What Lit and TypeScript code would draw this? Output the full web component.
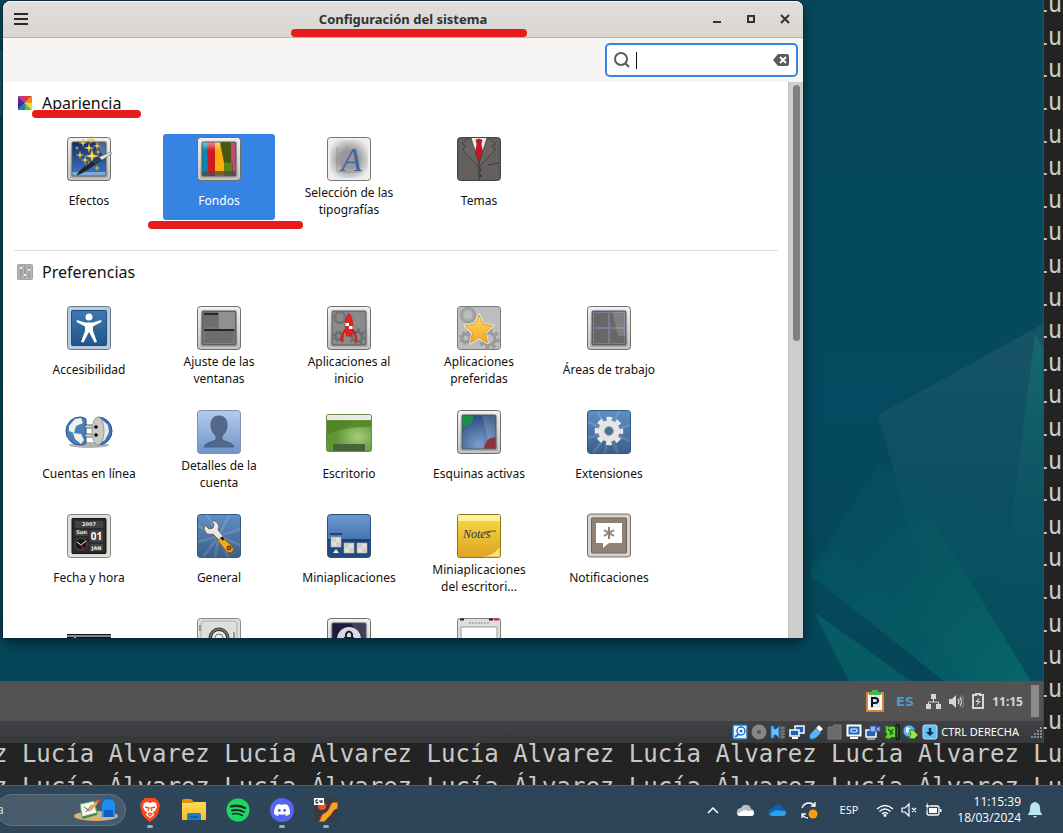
import { LitElement, html, svg, css, nothing } from "lit";
import { customElement } from "lit/decorators.js";
import { classMap } from "lit/directives/class-map.js";

const frame = (fill: string, inner: unknown = nothing) => svg`
  <rect x="2.5" y="2.5" width="43" height="43" rx="3" fill="url(#metal)" stroke="#6f6f6d"/>
  <rect x="4" y="4" width="40" height="40" rx="2" fill="none" stroke="#fff" stroke-opacity=".6"/>
  <rect x="7" y="7" width="34" height="34" rx="1" fill=${fill} stroke="#55575a"/>
  ${inner}`;

const glare = svg`<path d="M27 7.500h13.500V32H33z" fill="#fff" opacity=".16"/>`;

const rays = svg`<g stroke="#fff" stroke-opacity=".13" stroke-width="2.500">
  <path d="M24 24 3 14M24 24 12 3M24 24 34 3M24 24 45 17M24 24 45 33M24 24 33 45M24 24 20 45M24 24 8 45M24 24 3 30"/></g>`;

const sparkle = (x: number, y: number, r: number) => svg`<path fill="#ffd84d" stroke="#b98510" stroke-width=".3"
  d=${`M${x} ${y - r}L${x + r / 5} ${y - r / 5}L${x + r} ${y}L${x + r / 5} ${y + r / 5}L${x} ${y + r}L${x - r / 5} ${y + r / 5}L${x - r} ${y}L${x - r / 5} ${y - r / 5}z`}/>`;

const cogs = (c: string) => svg`<g fill="none" stroke=${c}>
  <circle cx="13" cy="11" r="7" stroke-width="2"/><circle cx="13" cy="11" r="5" stroke-width=".8"/>
  <circle cx="11" cy="34" r="4" stroke-width="3"/><circle cx="11" cy="34" r="6" stroke-width="2" stroke-dasharray="2.400 2.300"/>
  <circle cx="34" cy="35" r="6" stroke-width="3"/><circle cx="34" cy="35" r="9" stroke-width="3" stroke-dasharray="3.500 3.500"/></g>`;

const art: Record<string, unknown> = {
  effects: frame("url(#blue)", svg`
    <path d="M7.500 37h33v3.500h-33z" fill="#7fa6d8"/><path d="M30 7.500h10.500v17z" fill="#fff" opacity=".25"/>
    ${sparkle(26, 5, 4)}${sparkle(18, 8, 4)}${sparkle(32, 11, 4)}${sparkle(24, 13, 5)}${sparkle(33, 17, 3)}
    ${sparkle(15, 20, 4)}${sparkle(27, 21, 7)}${sparkle(20, 25, 4)}${sparkle(12, 13, 2)}${sparkle(24, 30, 4)}${sparkle(32, 33, 3)}
    <path d="M12 40c2-4 8-9 15-13l3 2c-6 5-12 9-18 11z" fill="#20242a" stroke="#111" stroke-width=".5"/>
    <path d="M26 27 38 20l2 3-10 6z" fill="#3b4049" stroke="#15181c" stroke-width=".5"/>
    <path d="m34 22 12-5 1 1.500L37 25z" fill="#dfe4ea" stroke="#555" stroke-width=".5"/>`),
  backgrounds: frame("#444", svg`
    <path d="M7.500 7.500H13v33H7.500z" fill="#0d84b4"/><path d="M12 7.500h9v33h-8z" fill="#d01a1f"/>
    <path d="M20 7.500h6l4 18v15H20z" fill="#fcae0b"/><path d="M25 7.500h12v33h-8V25z" fill="#5d8410"/>
    <path d="M25 7.500h11v20h-7z" fill="#465913"/><path d="M36 7.500h4.500v33H38z" fill="#c4497d"/>
    <path d="M7.500 36h33v4.500h-33z" fill="#524b45" opacity=".8"/><path d="M7.500 7.500h18v8h-18z" fill="url(#shine)"/>`),
  fonts: svg`<rect x="2.500" y="2.500" width="43" height="43" rx="3" fill="#eee" stroke="#777"/>
    <rect x="5" y="5" width="38" height="38" rx="9" fill="url(#smoke)"/>
    <path d="M12 12v25h25" fill="none" stroke="#777" stroke-width=".5"/>
    <text x="16" y="36" class="letter">A</text>`,
  themes: svg`<rect x="2.500" y="2.500" width="43" height="43" rx="3" fill="#5e5b5a" stroke="#494746"/>
    <path d="M6 5v39M9 5v39M12 5v39M15 5v39M18 20v24M21 27v17M27 27v17M30 20v24M33 5v39M36 5v39M39 5v39M42 5v39" stroke="#716e6c" stroke-width=".8"/>
    <path d="M15 3h18l-9 27z" fill="#e9e9e9"/><path d="m21 5 3-1 3 1-1 4 2 10-4 9-4-9 2-10z" fill="#c8171e" stroke="#8c0d12" stroke-width=".6"/>
    <path d="M14 3 7 9l4 2-3 4 16 17V29L16 3zM34 3l7 6-4 2 3 4-16 17V29L32 3z" fill="#686563" stroke="#3e3c3b" stroke-width=".8"/>
    <path d="M24 31v14M33 30l11-2" stroke="#3c3a39" fill="none"/><circle cx="25.500" cy="35" r="1.200" fill="#333"/><circle cx="25.500" cy="41" r="1.200" fill="#333"/>`,
  access: svg`<rect x="2.500" y="2.500" width="43" height="43" rx="3" fill="#b9cbe0" stroke="#6a7784"/>
    <rect x="6.500" y="6.500" width="35" height="35" rx="1" fill="url(#blue2)" stroke="#1f4e7c"/>
    <circle cx="24" cy="13" r="3.500" fill="#fff"/>
    <path d="m12 16 8 2.500h8L36 16l.500 2L28 22.500V27l4 11-2.500.500L24 28l-5.500 10.500L16 38l4-11v-4.500L11.500 18z" fill="#fff"/>`,
  tiling: frame("#6d6d6d", svg`<path d="M24 8h16v17H24z" fill="#909090"/>
    <path d="M9 9h14v2H9zM9 25h30v2H9z" fill="#26272b"/>
    <path d="M24 8v16M8 24h16M9 28v11.500h30V28" fill="none" stroke="#8186a0" stroke-width=".8"/>`),
  startup: frame("#8b8b8b", svg`<svg x="7" y="7" width="34" height="34" viewBox="3 3 42 42">${cogs("#6d6d6d")}</svg>
    <path d="M24 9c4 5 5 13 2.500 23h-5C19 22 20 14 24 9z" fill="#e32322" stroke="#a11" stroke-width=".5"/>
    <path d="M20.500 19H24v3h-3.500zM24 22h3.500v3H24z" fill="#fff"/>
    <path d="M20.500 26c-3 3-4 6-3.500 11M27.500 26c3 3 4 6 3.500 11" fill="none" stroke="#d31717" stroke-width="2"/>
    <circle cx="17" cy="36" r="2" fill="#e32322"/><circle cx="31" cy="36" r="2" fill="#e32322"/>`),
  preferred: svg`<rect x="2.500" y="2.500" width="43" height="43" rx="3" fill="#bdbdbd" stroke="#7a7a7a"/>${cogs("#999")}
    <path d="m24 11 4 9.500 10 1-7.500 7 2 10.500L24 33.500 15.500 39l2-10.500-7.500-7 10-1z" fill="url(#gold)" stroke="#f4efe4" stroke-width="2.500" stroke-linejoin="round"/>
    <path d="m24 11 4 9.500 10 1-7.500 7 2 10.500L24 33.500 15.500 39l2-10.500-7.500-7 10-1z" fill="url(#gold)" stroke="#d28c13" stroke-width=".8"/>`,
  spaces: frame("#676767", svg`<path d="M8 24h32M24 8v32" stroke="#777d94" stroke-width="2"/>
    <rect x="8.500" y="8.500" width="31" height="31" fill="none" stroke="#777d94"/>${glare}`),
  online: svg`<ellipse cx="24" cy="37" rx="20" ry="3" fill="#000" opacity=".3"/>
    <path d="M15 9a14 14 0 0 0 0 28q5 0 6-2V11q-2-2-6-2z" fill="#4a80bd" stroke="#255389"/>
    <path d="m4 18 6-7 6-1 2 5-7 3-2 7-5-2zM8 25l8 1 3 6-3 4-6-5z" fill="#eef1ec"/>
    <path d="M20 17h12v3H20zM20 26h12v3H20z" fill="#ddd" stroke="#444" stroke-width=".8"/>
    <path d="M33 9a14 14 0 0 1 0 28z" fill="#3e75b5" stroke="#255389"/><path d="m36 11 7 6 1 7-4 8-5 3z" fill="#e8ece6"/>
    <ellipse cx="33" cy="23" rx="6" ry="14" fill="#c9c9c6" stroke="#999"/><circle cx="31" cy="19" r="1.800"/><circle cx="31" cy="27" r="1.800"/>`,
  account: svg`<rect x="2.500" y="2.500" width="43" height="43" rx="3" fill="url(#pale)" stroke="#8391a6"/>
    <path d="M24 8c6 0 8 4 8 9s-2 8-5 11v4c5 2 11 3 12 7H9c1-4 7-5 12-7v-4c-3-3-5-6-5-11s2-9 8-9z" fill="#53688a" stroke="#48618a"/>`,
  desktop: svg`<rect x="1.500" y="6.500" width="45" height="37" rx="2" fill="url(#green)" stroke="#6d8a50"/>
    <path d="M2 13h44v6Q22 18 2 26z" fill="#457a1d" opacity=".6"/><path d="M2 12V8q0-1 1-1h42q1 0 1 1v4z" fill="#e9eae7"/>
    <path d="M8 36h32v7H8z" fill="#46643a"/>`,
  corners: frame("url(#deep)", svg`${glare}<path d="M7.500 7.500h11q0 10-11 11z" fill="#1f8f48"/><path d="M40.500 29v11.500H29q1-11 11.500-11.500z" fill="#8f3140"/>`),
  extensions: svg`<rect x="2.500" y="2.500" width="43" height="43" rx="3" fill="url(#steel)" stroke="#35597f"/>${rays}
    <circle cx="24" cy="23" r="12" fill="none" stroke="#e9e9e9" stroke-width="4.500" stroke-dasharray="5.400 4.020" stroke-dashoffset="2.700"/>
    <circle cx="24" cy="23" r="7.500" fill="none" stroke="#e5e5e5" stroke-width="6.500"/><circle cx="24" cy="23" r="4.500" fill="#4b6f96" stroke="#aaa"/>`,
  date: svg`<rect x="2.500" y="2.500" width="43" height="43" rx="3" fill="#dededd" stroke="#848482"/>
    <rect x="7" y="6.500" width="34" height="35" rx="1" fill="#2a2b2c" stroke="#111"/>
    <rect x="10" y="9" width="28" height="7" fill="#414243"/><rect x="10" y="18" width="13" height="6" fill="#414243"/>
    <rect x="25" y="18" width="13" height="12" fill="#414243"/><rect x="25" y="32" width="13" height="7" fill="#414243"/>
    <circle cx="16" cy="32" r="6" fill="#181818" stroke="#555"/><path d="m12 30 4 3 5-4" fill="none" stroke="#fff"/><path d="m16 32 2 5" stroke="#d22"/>
    <g class="dial"><text x="24" y="14">2007</text><text x="16.500" y="22">Sun</text><text x="31.500" y="38">JAN</text></g><text x="31.500" y="28" class="day">01</text>`,
  general: svg`<rect x="2.500" y="2.500" width="43" height="43" rx="3" fill="url(#steel)" stroke="#35597f"/>${rays}
    <path d="m24 23 4 3 9 8q3 4 0 6t-6-1l-8-10-2-4z" fill="#f7a81b" stroke="#8e5b08"/>
    <path d="M16 9q6-1 8 5l-1 4 5 6-4 4-6-6q-7 2-9-5l1-4 4 4 4-1 1-4z" fill="#e9eae8" stroke="#666"/>
    <path d="m25 25 4 1-1 3z"/><circle cx="34" cy="36" r="2" fill="#c87a0c" stroke="#222"/>`,
  applets: svg`<rect x="2.500" y="2.500" width="43" height="43" rx="3" fill="url(#sky)" stroke="#2d4f78"/>
    <path d="M3 28h42v15q0 2-2 2H5q-2 0-2-2z" fill="#214b80"/><path d="M5 22h12M3 28h42" stroke="#17365f" stroke-width="1.500"/>
    <path d="M6 25h10v10H6zM19 31h10v10H19zM32 31h10v10H32z" fill="#e0e0de" stroke="#a6a6a3" stroke-width=".6"/>
    <g fill="none" stroke="#bdbdba"><circle cx="9" cy="28" r="1.500"/><circle cx="13" cy="32" r="1.500"/><circle cx="22" cy="34" r="1.500"/><circle cx="26" cy="38" r="1.500"/><circle cx="35" cy="34" r="1.500"/><circle cx="39" cy="38" r="1.500"/></g>
    <path d="m8 41 3-4 3 4z" fill="#e8eef7"/>`,
  desklets: svg`<rect x="2.500" y="2.500" width="43" height="43" rx="2" fill="url(#paper)" stroke="#8b741c"/>
    <path d="M3 3h42v6H3z" fill="#fbf19b"/><path d="M28 44c9-1 15-5 17-12v13H28z" fill="#fae57e" stroke="#c9971a" stroke-width=".7"/>
    <text x="8" y="26" class="script">Notes</text><path d="M30 20q5-1 11-1" stroke="#28304a" fill="none" stroke-width=".8"/>`,
  notify: svg`<rect x="2.500" y="2" width="43" height="43" rx="3" fill="#d5d2cc" stroke="#777068"/>
    <rect x="6.500" y="6" width="35" height="35" rx="1" fill="#8d8274" stroke="#6c6458"/>
    <path d="M11 11h26v20H24l-6 5v-5h-7z" fill="#fff"/><path d="M24 15v12M19 18l10 6M29 18l-10 6" stroke="#8d8274" stroke-width="2"/>`,
  panel: svg`<path d="M2 18h44v30H2z" fill="#111"/><path d="M2 20h44" stroke="#fff"/><path d="m9 23 1-2 2 2" stroke="#ccc" fill="none"/>`,
  privacy: svg`<rect x="2.500" y="2.500" width="43" height="43" rx="3" fill="#dededc" stroke="#8a8a88"/>
    <rect x="6" y="5" width="36" height="42" rx="3" fill="none" stroke="#b0b0ae"/><circle cx="24" cy="22" r="10" fill="#777" stroke="#333"/>
    <circle cx="24" cy="22" r="7.500" fill="#ececea" stroke="#222"/><path d="M39 16v10M5 9v6" stroke="#999" stroke-width="2"/><circle cx="24" cy="22" r="4" fill="none" stroke="#777"/>`,
  lock: frame("#1c1b3d", svg`<circle cx="24" cy="23" r="12" fill="#d8d8da"/><path d="M21 21v-3q3-5 6 0v3" fill="none" stroke="#1c1b3d" stroke-width="2"/><path d="M19 21h10v7H19z" fill="#1c1b3d"/>${glare}`),
  windows: svg`<rect x="2.500" y="2.500" width="43" height="43" rx="2" fill="#dededd" stroke="#818180"/>
    <path d="M5 3.500h4" stroke="#222" stroke-width="2"/><path d="M34 3.500h4" stroke="#222" stroke-width="2"/><path d="M39 3.500h5" stroke="#d22" stroke-width="2"/>
    <path d="M14 7h20" stroke="#888" stroke-dasharray="2 1"/><path d="M6 11h36v34H6z" fill="#fff" stroke="#999"/>`,
};

const appearance = [
  ["effects", "Efectos"], ["backgrounds", "Fondos"], ["fonts", "Selección de las tipografías"], ["themes", "Temas"],
];
const preferences = [
  ["access", "Accesibilidad"], ["tiling", "Ajuste de las ventanas"], ["startup", "Aplicaciones al inicio"],
  ["preferred", "Aplicaciones preferidas"], ["spaces", "Áreas de trabajo"],
  ["online", "Cuentas en línea"], ["account", "Detalles de la cuenta"], ["desktop", "Escritorio"],
  ["corners", "Esquinas activas"], ["extensions", "Extensiones"],
  ["date", "Fecha y hora"], ["general", "General"], ["applets", "Miniaplicaciones"],
  ["desklets", "Miniaplicaciones del escritori..."], ["notify", "Notificaciones"],
  ["panel", ""], ["privacy", ""], ["lock", ""], ["windows", ""],
];

const devices = [
  svg`<rect x="1" y="1" width="14" height="14" rx="1" fill="#e9f4fc" stroke="#1e73c8" stroke-width="1.500"/><circle cx="9" cy="7" r="4" fill="#fff" stroke="#1e73c8" stroke-width="1.500"/><circle cx="9" cy="7" r="1.500" fill="#1e73c8"/><path d="m3 13 4-3" stroke="#1e73c8" stroke-width="2"/>`,
  svg`<circle cx="8" cy="8" r="7.500" fill="#868686"/><circle cx="8" cy="8" r="2" fill="#555"/>`,
  svg`<path d="M9 2h5v13H9z" fill="#555"/><path d="M11 4h4M11 7h4M11 10h4M11 13h4" stroke="#999"/><path d="M1 2h3v3h2l3-3v12l-3-3H4v3H1z" fill="#6fc3f4" stroke="#1c6db5"/>`,
  svg`<rect x="6" y="2" width="9" height="7" fill="#1763b6" stroke="#fff" stroke-width="1.500"/><rect x="1" y="6" width="9" height="6" fill="#1763b6" stroke="#fff" stroke-width="1.500"/><path d="M3 14h6" stroke="#fff" stroke-width="2"/>`,
  svg`<path d="M2 15q-2-3 1-6l5-5 5 5-5 5q-3 2-6 1z" fill="#58b7f3" stroke="#1a5da5"/><path d="m8 4 3-3 4 4-3 3z" fill="#fff" stroke="#888"/>`,
  svg`<path d="M1 3h5l1-2h7v14H1z" fill="#6b6b6b" stroke="#7d7d7d"/>`,
  svg`<rect x="1.500" y="1.500" width="13" height="10" fill="#1d63bd" stroke="#fff" stroke-width="2"/><path d="M5 5h6v3H5z" fill="none" stroke="#fff"/><path d="M4 14h8" stroke="#fff" stroke-width="2"/>`,
  svg`<rect x="1" y="6" width="10" height="7" fill="#1d63bd" stroke="#fff" stroke-width="1.500"/><path d="M2 15h8" stroke="#fff"/><path d="M5 2h6v6H5zM11 4l4-2v6l-4-2z" fill="#8db5f7" stroke="#2f4e9d"/>`,
  svg`<path d="m1 1 4 2 3-1 4 1v11l-4-1-3 2-4-1 2-4-2-3 1-2z" fill="#6ad43b" stroke="#1c7a1c"/><path d="m4 5 5 5M9 5l-3 6" stroke="#176417" stroke-width="1.500"/><path d="M12 1h3v14h-3z" fill="#2a6a22" stroke="#000"/>`,
  svg`<circle cx="6" cy="7" r="6" fill="#5db5ea" stroke="#1d5f9f"/><path d="m3 3 4 1-1 4-3 1z" fill="#e7f6ff"/><path d="m6 14 2-4-2-4h4l5 5-4 4z" fill="#a7e34b" stroke="#37881b"/>`,
  svg`<rect x="1" y="1" width="14" height="14" rx="2" fill="#5fc0f4" stroke="#b4e2fb"/><path d="M8 4v5" stroke="#0c2a52" stroke-width="2.500"/><path d="M4 8h8l-4 4z" fill="#0c2a52"/>`,
];

const dock = [
  { running: true, icon: svg`<path d="m7 0h10l3 3 2 4-2 9-3 4-5 4-5-4-3-4L2 7l2-4z" fill="#fb4a22"/><path d="m6 5 3-1 3 1 3-1 3 1 1 4-2 4-2 1 1 3-4 3-4-3 1-3-2-1-2-4z" fill="#fff"/><path d="m7 9 4 1-1 3m7-4-4 1 1 3m-4 3 2-1 2 1-2 2z" fill="none" stroke="#fb4a22" stroke-width="1.300"/>` },
  { running: false, icon: svg`<path d="M0 3q0-2 2-2h7l3 3h12v6H0z" fill="#d99a09"/><path d="M0 5h10l2-1h12v18H0z" fill="url(#folder)"/><path d="M5 22v-5q0-2 2-2h10q2 0 2 2v5z" fill="#1c7dc5"/><path d="M8 19h8" stroke="#0b5799" stroke-width="1.500"/>` },
  { running: false, icon: svg`<circle cx="12" cy="12" r="11.500" fill="#1ed760"/><g fill="none" stroke="#122b2b" stroke-linecap="round"><path d="M5 8.500q7-2 14 1.500" stroke-width="2.300"/><path d="M6 12.500q6-1.500 12 1.500" stroke-width="1.900"/><path d="M6.500 16q5-1.300 10 1.500" stroke-width="1.500"/></g>` },
  { running: true, icon: svg`<circle cx="12" cy="12" r="12" fill="#5865f2"/><svg x="4" y="4" width="16" height="16" viewBox="0 0 24 24"><path fill="#fff" d="M20.317 4.370a19.800 19.800 0 0 0-4.885-1.515q-.400.600-.687 1.286a18.300 18.300 0 0 0-5.487 0A12.600 12.600 0 0 0 8.562 2.855 19.700 19.700 0 0 0 3.677 4.370C.533 9.046-.319 13.580.099 18.058q3 2.250 6.024 3.085l1.310-2.050-1.960-.950.470-.400q6.070 2.700 12.140 0l.480.400-1.980.950 1.310 2.050q3-.850 6.033-3.085c.500-5.177-.838-9.674-3.609-13.688z"/><circle cx="8" cy="12.800" r="2.200" fill="#5865f2"/><circle cx="16" cy="12.800" r="2.200" fill="#5865f2"/></svg>` },
  { running: true, icon: svg`<path d="M0 0h24v24H0z" fill="#3c3b42"/><path d="M4 24c3-2 2-7 6-9 6-2 5-9 9-11h5v7c-5 0-5 5-9 8-3 2-2 4-5 5z" fill="#f5a12c" stroke="#7b3012"/><circle cx="8" cy="8" r="4" fill="#f2521b"/><path d="M0 0h10v7H0z" fill="#fff"/><path d="M4 2H2v3h2V4M6 2v2h2M8 2v3" fill="none" stroke="#111"/>` },
];

const cloud = (a: string, b: string) => svg`<path d="M4 15q-4-1-3-5 1-3 4-3 2-4 6-3 3 0 4 4 3 0 3 4 0 3-3 3z" fill=${a}/><path d="M4 15q-2 0-3-2l7-4 5 1q5-1 5 2 0 3-3 3z" fill=${b}/>`;

const tray = [
  svg`<path d="m4 12 5-5 5 5" fill="none" stroke="#fff" stroke-width="1.500"/>`,
  cloud("#b9bec3", "#fff"),
  cloud("#0a64b5", "#28a0ea"),
  svg`<g fill="none" stroke="#fff" stroke-width="1.300"><path d="M2 7q2-5 7-5 4 0 6 3M15 1v4h-4M2 17v-4h4M2 13q2 4 6 4"/></g><circle cx="13" cy="13" r="4.500" fill="#ff9a0b"/>`,
];
const quick = [
  svg`<g fill="none" stroke="#fff" stroke-width="1.300"><path d="M1 8q8-7 16 0M3.500 10.500q5.500-5 11 0M6 13q3-3 6 0"/></g><circle cx="9" cy="14.500" r="1.400" fill="#fff"/>`,
  svg`<path d="M2 7h3l4-4v12l-4-4H2zM12 7l4 4M16 7l-4 4" fill="none" stroke="#fff" stroke-width="1.200"/>`,
  svg`<rect x="3" y="5" width="12" height="9" rx="2" fill="none" stroke="#fff" stroke-width="1.300"/><path d="M5 7h8v5H5zM16 8h1.500v3H16z" fill="#fff"/><path d="m4 1-3 5h2l-1 4 4-6H4z" fill="#fff" stroke="#2d4457" stroke-width=".6"/>`,
];

@customElement("app-root")
export class AppRoot extends LitElement {
  static styles = css`
    :host { display: block; font-family: "Noto Sans", "Open Sans", sans-serif; font-size: 12px; color: #111; }
    * { box-sizing: border-box; }
    button { border: 0; padding: 0; margin: 0; background: none; font: inherit; color: inherit; display: flex; align-items: center; justify-content: center; }
    svg { display: block; flex: none; }
    .defs { position: absolute; }
    .screen { height: 100vh; display: grid; grid-template-rows: minmax(0, 1fr) 48px; overflow: hidden; background: #232323; }
    .work { position: relative; overflow: hidden; }
    .terminal { height: calc(100% + 30px); margin: -12px 0 0 -7px; display: grid; grid-template-rows: repeat(25, 1fr); align-items: center;
      font: 24px/28px "DejaVu Sans Mono", monospace; color: #c9c9c7; white-space: pre; }
    .terminal .side { margin-left: 72ch; }
    .vm { position: absolute; inset: 0 19px 42px 0; display: flex; flex-direction: column; border-right: 1px solid #454545; background: #054a5f; }
    .desk { flex: 1; min-height: 0; position: relative; overflow: hidden; background: linear-gradient(#06485c, #054a60 60%, #054659); }
    .wall { width: 100%; height: 100%; }
    .settings { position: absolute; inset: 1px 240px 43px 3px; display: flex; flex-direction: column; border-radius: 8px 8px 0 0; background: #f6f5f4;
      box-shadow: 0 0 0 1px #0a2c38, 0 4px 14px rgba(0, 0, 0, .55); }
    .titlebar { height: 37px; display: grid; grid-template-columns: 103px 1fr 103px; align-items: center; border-bottom: 1px solid #b8b3ad;
      border-radius: 8px 8px 0 0; background: linear-gradient(#e1dedb, #d9d5d1); box-shadow: inset 0 1px #f6f4f3; }
    .menu { width: 36px; height: 36px; }
    .caption { margin: 0; position: relative; text-align: center; font-size: 13px; line-height: 20px; font-weight: 700; color: #2e3436; }
    .controls { display: flex; }
    .controls button { width: 34px; height: 36px; }
    .toolbar { height: 44px; display: flex; justify-content: flex-end; align-items: center; padding: 0 5px; }
    .search { width: 193px; height: 34px; display: flex; align-items: center; gap: 6px; padding: 0 7px; border: 2px solid #3584e4; border-radius: 5px; background: #fff; }
    .search input { flex: 1; min-width: 0; border: 0; outline: 0; padding: 0; background: none; font: inherit; }
    .caret { width: 1px; height: 17px; background: #111; }
    .body { flex: 1; min-height: 0; display: flex; background: #fff; }
    .list { flex: 1; overflow: hidden; padding: 0 10px 0 11px; }
    .track { width: 15px; padding: 3px 3px 0 4px; background: #cecece; border-left: 1px solid #c4c2bf; }
    .thumb { height: 256px; border-radius: 4px; background: #7e8182; }
    .group { padding: 10px 0 30px; }
    .group + .group { border-top: 1px solid #dededd; }
    .heading { margin: 0 0 20px; padding-left: 3px; display: flex; align-items: center; gap: 9px; font-size: 16px; line-height: 22px; font-weight: 400; }
    .heading .name { position: relative; }
    .grid { display: grid; grid-template-columns: repeat(5, 112px); gap: 18px; padding-left: 19px; }
    .item { position: relative; flex-direction: column; justify-content: flex-start; gap: 1px; padding: 1px 4px 3px; border-radius: 3px; }
    .item.selected { background: #3584e4; color: #fff; }
    .label { height: 33px; display: flex; align-items: safe center; line-height: 17px; text-align: center; }
    .mark { position: absolute; height: 8px; border-radius: 4px; background: #e61c1c; z-index: 1; }
    .caption .mark { left: 50%; width: 236px; margin-left: -112px; top: 20px; }
    .heading .mark { left: -10px; right: -20px; top: 18px; }
    .item .mark { left: -15px; right: -28px; bottom: -9px; }
    .letter { font: italic 34px "Liberation Serif", serif; fill: #41659e; }
    .script { font: italic 12px "Liberation Serif", serif; fill: #28304a; }
    .dial { font: bold 5px "DejaVu Sans", sans-serif; fill: #e8e8e8; text-anchor: middle; }
    .day { font: bold 10px "Noto Sans", sans-serif; fill: #fff; text-anchor: middle; }
    .panel { height: 40px; display: flex; justify-content: flex-end; align-items: center; gap: 8px; padding-right: 4px; background: #535353; color: #d6d6d6; }
    .panel .lang { margin: 0 4px; font: bold 13px "DejaVu Sans", sans-serif; color: #4d9bc6; }
    .panel .hour { font-weight: 700; }
    .panel .peek { width: 8px; height: 32px; background: #8b8b8b; }
    .status { height: 22px; display: flex; justify-content: flex-end; align-items: center; gap: 3px; background: linear-gradient(#3f4144, #37383a); color: #fff; border-radius: 0 0 3px 0; }
    .status .grip { margin-left: 6px; }
    .status .host { font-size: 11px; line-height: 16px; }
    .taskbar { display: flex; align-items: center; justify-content: space-between; padding-right: 20px; border-top: 1px solid #4d5f6d;
      background: linear-gradient(90deg, #2e4658, #2d4358); color: #fff; font-family: "Open Sans", "Noto Sans", sans-serif; }
    .start { display: flex; align-items: center; }
    .find { width: 130px; height: 32px; margin: 0 2px 0 -4px; display: flex; align-items: center; padding: 0 5px 0 0; border: 1px solid #617281; border-radius: 16px; background: #475b6a; }
    .find input { flex: 1; min-width: 0; border: 0; outline: 0; padding: 0; background: none; font: inherit; color: #fff; }
    .find input::placeholder { color: #dfe4e8; }
    .app { width: 44px; height: 47px; position: relative; }
    .app.running::after { content: ""; position: absolute; bottom: 5px; width: 6px; height: 3px; border-radius: 2px; background: #9fa9b2; }
    .tray { display: flex; align-items: center; gap: 6px; }
    .tray div { display: flex; }
    .tray .hidden button { width: 32px; height: 40px; }
    .tray .input { width: 36px; height: 40px; font-size: 11px; }
    .tray .quick { width: 72px; height: 40px; justify-content: space-around; }
    .tray .clock { width: 70px; flex-direction: column; align-items: flex-end; line-height: 16px; }
  `;

  private item([key, name]: string[]) {
    const selected = key === "backgrounds";
    return html`<button class=${classMap({ item: true, selected })}>
      <svg width="48" height="48">${art[key]}</svg>
      <span class="label">${name}</span>
      ${selected ? html`<span class="mark"></span>` : nothing}
    </button>`;
  }

  render() {
    const line = "z" + " Lucía Álvarez".repeat(5) + " Lu";
    return html`
      <svg class="defs" width="0" height="0"><defs>
        <linearGradient id="metal" x2="0" y2="1"><stop stop-color="#ececea"/><stop offset="1" stop-color="#aaaaa7"/></linearGradient>
        <linearGradient id="blue" x2="0" y2="1"><stop stop-color="#0f2f6e"/><stop offset="1" stop-color="#3d78c8"/></linearGradient>
        <linearGradient id="blue2" x2="0" y2="1"><stop stop-color="#3e78b0"/><stop offset="1" stop-color="#23558a"/></linearGradient>
        <linearGradient id="steel" x2="0" y2="1"><stop stop-color="#5f8fc4"/><stop offset="1" stop-color="#3a5f8a"/></linearGradient>
        <linearGradient id="pale" x2="0" y2="1"><stop stop-color="#b4cbee"/><stop offset="1" stop-color="#6e94c9"/></linearGradient>
        <linearGradient id="sky" x2="0" y2="1"><stop stop-color="#6a9bd0"/><stop offset="1" stop-color="#2a5797"/></linearGradient>
        <linearGradient id="gold" x2="0" y2="1"><stop stop-color="#ffdc63"/><stop offset="1" stop-color="#f9a11e"/></linearGradient>
        <linearGradient id="paper" x2="0" y2="1"><stop stop-color="#f5dd45"/><stop offset="1" stop-color="#dfa326"/></linearGradient>
        <linearGradient id="folder" x2="0" y2="1"><stop stop-color="#ffdb60"/><stop offset="1" stop-color="#f9bd22"/></linearGradient>
        <linearGradient id="shine" x2="0" y2="1"><stop stop-color="#fff" stop-opacity=".5"/><stop offset="1" stop-color="#fff" stop-opacity="0"/></linearGradient>
        <radialGradient id="green" cx=".7" cy=".6"><stop stop-color="#a9cb7d"/><stop offset="1" stop-color="#5f9632"/></radialGradient>
        <radialGradient id="deep" cx=".5" cy=".9" r=".9"><stop stop-color="#7ea0cf"/><stop offset="1" stop-color="#274b7c"/></radialGradient>
        <radialGradient id="smoke" r=".6"><stop offset=".4" stop-color="#989898"/><stop offset="1" stop-color="#989898" stop-opacity="0"/></radialGradient>
      </defs></svg>
      <div class="screen">
        <div class="work">
          <div class="terminal">
            ${Array.from({ length: 23 }, () => html`<span class="side">Lu</span>`)}
            ${Array.from({ length: 2 }, () => html`<span>${line}</span>`)}
          </div>
          <section class="vm">
            <div class="desk">
              <svg class="wall" viewBox="0 0 1044 681" preserveAspectRatio="xMaxYMax slice">
                <defs>
                  <linearGradient id="slate" x2="0" y2="1"><stop stop-color="#185467"/><stop offset=".8" stop-color="#0a4f60" stop-opacity=".6"/><stop offset="1" stop-color="#0a4f60" stop-opacity="0"/></linearGradient>
                  <linearGradient id="teal" x2="1" y2="1"><stop stop-color="#075465" stop-opacity="0"/><stop offset=".35" stop-color="#075562" stop-opacity=".7"/><stop offset="1" stop-color="#08666a"/></linearGradient>
                  <linearGradient id="beam" x2="0" y2="1"><stop stop-color="#146970"/><stop offset="1" stop-color="#0b5263" stop-opacity="0"/></linearGradient>
                </defs>
                <path d="M879 415 1044 324V681H954z" fill="url(#slate)"/>
                <path d="M810 574 880 462 912 484 1032 681H945z" fill="url(#teal)"/>
                <path d="M912 484 1044 520V681H1032z" fill="#075562" opacity=".4"/>
                <path d="M835 546 976 681H945L810 574z" fill="#075a63" opacity=".35"/>
                <path d="m1036 335 8 13V620H1000z" fill="url(#beam)"/>
                <path d="m815 612 97 69H850z" fill="#075b64"/>
                <path d="M0 50h8v65H0z" fill="#2f6a6f" opacity=".5"/>
              </svg>
              <section class="settings">
                <header class="titlebar">
                  <button class="menu"><svg width="14" height="14"><path d="M0 2h14M0 7h14M0 12h14" stroke="#2a2730" stroke-width="2"/></svg></button>
                  <h1 class="caption">Configuración del sistema<span class="mark"></span></h1>
                  <div class="controls">
                    <button><svg width="10" height="10"><path d="M1 8h8" stroke="#2e3436" stroke-width="2"/></svg></button>
                    <button><svg width="10" height="10"><path d="M2 2h6v6H2z" fill="none" stroke="#2e3436" stroke-width="2"/></svg></button>
                    <button><svg width="10" height="10"><path d="m1 1 8 8M9 1 1 9" stroke="#2e3436" stroke-width="2"/></svg></button>
                  </div>
                </header>
                <div class="toolbar">
                  <label class="search">
                    <svg width="16" height="16"><circle cx="7" cy="7" r="6" fill="none" stroke="#565b5c" stroke-width="2"/><path d="m11 11 4 4" stroke="#565b5c" stroke-width="2"/></svg>
                    <span class="caret"></span>
                    <input type="text">
                    <button><svg width="16" height="14"><path d="M0 7 5 1h9q2 0 2 2v8q0 2-2 2H5z" fill="#565b5c"/><path d="m7 4 6 6m0-6-6 6" stroke="#fff" stroke-width="2"/></svg></button>
                  </label>
                </div>
                <div class="body">
                  <div class="list">
                    <section class="group">
                      <h2 class="heading">
                        <svg width="16" height="16"><path d="M8 8V1H1z" fill="#c2386f"/><path d="M8 8V1h7z" fill="#e33b2e"/><path d="M8 8 15 1v7z" fill="#f08c1e"/><path d="M8 8h7v7z" fill="#e8e020"/><path d="M8 8v7h7z" fill="#67b82b"/><path d="M8 8v7H1z" fill="#1288a5"/><path d="M8 8H1v7z" fill="#2838a0"/><path d="M8 8 1 1v7z" fill="#6a1c99"/></svg>
                        <span class="name">Apariencia<span class="mark"></span></span>
                      </h2>
                      <div class="grid">${appearance.map((i) => this.item(i))}</div>
                    </section>
                    <section class="group">
                      <h2 class="heading">
                        <svg width="16" height="16"><rect x=".5" y=".5" width="15" height="15" rx="1" fill="#b4b4b2" stroke="#a5a5a3"/><path d="M4 2v12M8 2v12M12 2v12" stroke="#868684"/><path d="M3 4h2M7 11h2M11 6h2" stroke="#eee" stroke-width="2"/></svg>
                        <span class="name">Preferencias</span>
                      </h2>
                      <div class="grid">${preferences.map((i) => this.item(i))}</div>
                    </section>
                  </div>
                  <div class="track"><div class="thumb"></div></div>
                </div>
              </section>
            </div>
            <footer class="panel">
              <svg width="18" height="22"><path d="M1 3h16v18H1z" fill="#fff" stroke="#e0812d" stroke-width="2"/><path d="M4 5h10v13H4z" fill="#dbe8f5"/><path d="M3 2h3V0h6v2h3v3H3z" fill="#4eb34c"/><path d="M6 17V8h3q3 0 3 2.500T9 13H6" fill="none" stroke="#111" stroke-width="2"/></svg>
              <span class="lang">ES</span>
              <svg width="15" height="15"><path d="M5 0h5v5H5zM0 10h5v5H0zM10 10h5v5h-5z" fill="#d6d6d6"/><path d="M7.500 5v3M2.500 10V8h10v2" fill="none" stroke="#d6d6d6"/></svg>
              <svg width="15" height="15"><path d="M0 5h3l4-4v13l-4-4H0z" fill="#d6d6d6"/><path d="M9 5q2 2.500 0 5M11 3q3 4.500 0 9" fill="none" stroke="#c6c6c6" stroke-width="1.500"/><path d="M13 1q4 6.500 0 13" fill="none" stroke="#8d8d8d"/></svg>
              <svg width="12" height="16"><path d="M1 2h3V1h4v1h3v13H1z" fill="none" stroke="#d6d6d6" stroke-width="2"/><path d="M8 4 3 9h3l-2 4 5-5H6z" fill="#d6d6d6"/></svg>
              <span class="hour">11:15</span>
              <button class="peek"></button>
            </footer>
            <div class="status">
              ${devices.map((d) => html`<svg width="16" height="16">${d}</svg>`)}
              <span class="host">CTRL DERECHA</span>
              <svg class="grip" width="15" height="15"><path d="M12 3h2M9 6h5M6 9h8M3 12h11" stroke="#8a8a8a" stroke-width="2" stroke-dasharray="2 1"/></svg>
            </div>
          </section>
        </div>
        <nav class="taskbar">
          <div class="start">
            <label class="find">
              <input type="text" placeholder="a">
              <svg width="46" height="26">
                <ellipse cx="22" cy="19" rx="22" ry="5" fill="#d9b17c"/><path d="m6 7 14-3 3 12-15 4z" fill="#f4f4f2" stroke="#57a05a"/><path d="m8 20 15-4v2L9 22z" fill="#3f8f47"/><path d="m10 10 6 4M12 15l6-7" stroke="#666"/>
                <path d="m15 12 7-8 2 2-7 8z" fill="#f1a343"/><path d="m22 4 2-2 2 2-2 2z" fill="#e7564a"/>
                <path d="M28 20V9q0-7 6.500-7T41 9v11z" fill="#1f8af0"/><path d="M30 13h9v7h-9z" fill="#0d5fc4"/><path d="M32 2q2.500-3 5 0" fill="none" stroke="#0d5fc4" stroke-width="2"/>
              </svg>
            </label>
            ${dock.map((a) => html`<button class=${classMap({ app: true, running: a.running })}><svg width="24" height="24">${a.icon}</svg></button>`)}
          </div>
          <div class="tray">
            <div class="hidden">${tray.map((t) => html`<button><svg width="18" height="18">${t}</svg></button>`)}</div>
            <button class="input">ESP</button>
            <button class="quick">${quick.map((t) => html`<svg width="18" height="18">${t}</svg>`)}</button>
            <button class="clock"><span>11:15:39</span><span>18/03/2024</span></button>
            <button><svg width="16" height="18"><path d="M1 13q2-1 2-6 0-5 5-6 5 1 5 6 0 5 2 6v1H1z" fill="#b8e8ee"/><path d="M6 15h4q-2 3-4 0z" fill="#b8e8ee"/></svg></button>
          </div>
        </nav>
      </div>`;
  }
}
